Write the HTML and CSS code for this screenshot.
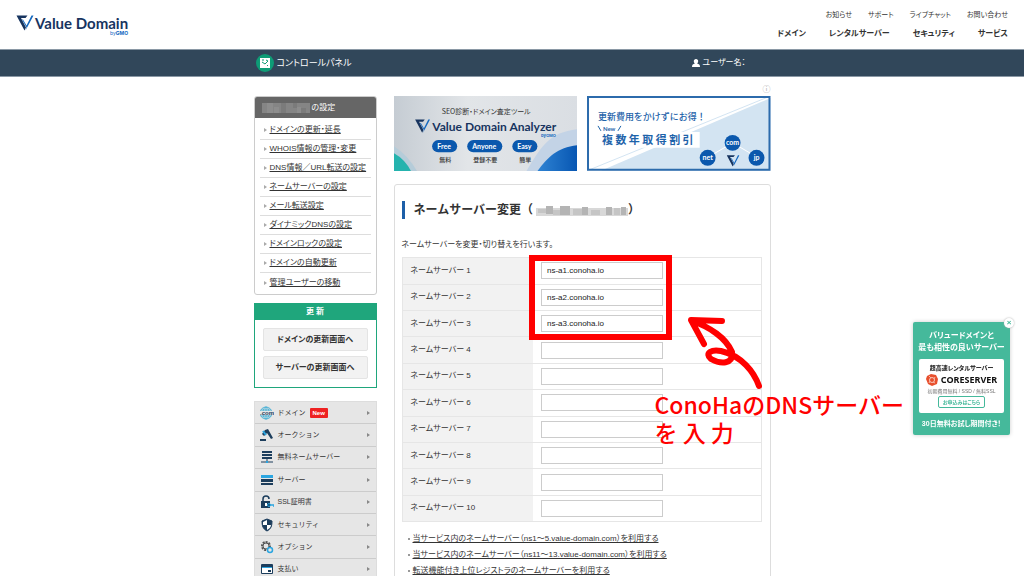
FILE: index.html
```html
<!DOCTYPE html>
<html lang="ja">
<head>
<meta charset="utf-8">
<title>コントロールパネル</title>
<link rel="stylesheet" href="styles.css">
</head>
<body>
<svg class="defs" aria-hidden="true">
  <symbol id="mark" viewBox="0 0 34 32">
    <path d="M0 1h22l-4 5H9l10 19-3 6z" fill="#17345f"/>
    <path d="M13 9l7 12L30 1h4L18 31l2-6-9-16z" fill="#1468bf"/>
  </symbol>
</svg>
<header class="header">
  <a class="logo" href="#"><svg class="logo-mark"><use href="#mark"/></svg><span class="logo-name">Value Domain<small>by<b>GMO</b></small></span></a>
  <nav class="navs">
    <div class="nav-sub"><a href="#">お知らせ</a><a href="#">サポート</a><a href="#">ライブチャット</a><a href="#">お問い合わせ</a></div>
    <div class="nav-main"><a href="#">ドメイン</a><a href="#">レンタルサーバー</a><a href="#">セキュリティ</a><a href="#">サービス</a></div>
  </nav>
</header>
<div class="bar">
  <div class="bar-inner">
    <a class="bar-title" href="#">
      <svg class="bar-icon" viewBox="0 0 18 18"><circle cx="9" cy="9" r="9" fill="#0e9c76"/><path d="M4 4h10v10H4z" fill="#fff"/><path d="M6 6h2M6 8l3 2 3-3M10 6l2 1M11 12l1-1" stroke="#0e9c76" fill="none"/></svg>
      コントロールパネル</a>
    <span class="user"><svg class="user-icon" viewBox="0 0 8 8"><path d="M4 0c3 0 2.500 4 1 4.500C7 5 8 5.500 8 8H0c0-2.500 1-3 3-3.500C1.500 4 1 0 4 0z" fill="#fff"/></svg>ユーザー名：</span>
  </div>
</div>
<div class="page">
  <aside class="side">
    <section class="settings">
      <h2><svg class="mosaic-dark" viewBox="0 0 48 10"><path fill="#858585" d="M0 0h48v10H0z"/><path fill="#7b7b7b" d="M19 0h5v10h-5zM31 0h4v5h-4zM39 5h5v5h-5z"/><path fill="#8d8d8d" d="M5 0h6v10H5zM35 4h4v6h-4zM12 4h5v6h-5z"/></svg>の設定</h2>
      <ul>
        <li><a href="#">ドメインの更新・延長</a></li>
        <li><a href="#">WHOIS情報の管理・変更</a></li>
        <li><a href="#">DNS情報／URL転送の設定</a></li>
        <li><a href="#">ネームサーバーの設定</a></li>
        <li><a href="#">メール転送設定</a></li>
        <li><a href="#">ダイナミックDNSの設定</a></li>
        <li><a href="#">ドメインロックの設定</a></li>
        <li><a href="#">ドメインの自動更新</a></li>
        <li><a href="#">管理ユーザーの移動</a></li>
      </ul>
    </section>
    <section class="renew">
      <h2>更 新</h2>
      <div class="renew-body"><button type="button">ドメインの更新画面へ</button><button type="button">サーバーの更新画面へ</button></div>
    </section>
    <nav class="menu">
      <a href="#"><svg viewBox="0 0 14 14"><g fill="none" stroke="#4fb3d6"><circle cx="6" cy="7" r="6"/><ellipse cx="6" cy="7" rx="3" ry="6"/><path d="M6 1v12M1 4h10M1 10h10"/></g><path d="M0 5h14v4H0z" fill="#e6e6e6"/><text x="0" y="9" class="com">.com</text></svg>ドメイン<em>New</em></a>
      <a href="#"><svg viewBox="0 0 14 14"><path d="M5 2l3-1 5 9-2 1-4-6-3 3-2-2z" fill="#1c3d5c"/><path d="M3 3l3 4" stroke="#2ba5e0" stroke-width="2"/><path d="M0 11h6v2H0z" fill="#1c3d5c"/></svg>オークション</a>
      <a href="#"><svg viewBox="0 0 14 14"><path d="M2 1h10v2H2zM2 4h10v2H2zM2 7h10v2H2z" fill="#1c3d5c"/><path d="M7 9v3M1 12h12" stroke="#1c3d5c"/><path d="M6 11h2v2H6z" fill="#2ba5e0"/></svg>無料ネームサーバー</a>
      <a href="#"><svg viewBox="0 0 14 14"><path d="M1 2h12v3H1z" fill="#2ba5e0"/><path d="M1 6h12v3H1zM1 10h12v2H1z" fill="#1c3d5c"/></svg>サーバー</a>
      <a href="#"><svg viewBox="0 0 14 14"><path d="M3 7V4c0-4 6-4 6 0" fill="none" stroke="#1c3d5c" stroke-width="1.500"/><path d="M1 6h9v7H1z" fill="#1c3d5c"/><path d="M5 8h2v3H5z" fill="#fff"/><circle cx="9" cy="10" r="1.500" fill="none" stroke="#2ba5e0"/><path d="M10 10h4v2" fill="none" stroke="#2ba5e0" stroke-width="1.500"/></svg>SSL証明書</a>
      <a href="#"><svg viewBox="0 0 14 14"><path d="M7 1l5 2c0 5-1 8-5 10C3 11 2 8 2 3z" fill="#1c3d5c" stroke="#1c3d5c"/><path d="M7 2v5H3V4zM7 7h4c0 2-2 4-4 5z" fill="#fff"/></svg>セキュリティ</a>
      <a href="#"><svg viewBox="0 0 14 14"><circle cx="6" cy="6" r="4" fill="none" stroke="#555" stroke-width="2" stroke-dasharray="2 1"/><circle cx="6" cy="6" r="3" fill="none" stroke="#555"/><circle cx="10" cy="10" r="2.500" fill="#e6e6e6" stroke="#2ba5e0" stroke-width="1.500"/></svg>オプション</a>
      <a href="#"><svg viewBox="0 0 14 14"><rect x="1" y="2" width="12" height="10" rx="1" fill="#1c3d5c"/><path d="M2 5h10v6H2z" fill="#fff"/><path d="M2 5h10v1H2z" fill="#2ba5e0"/><path d="M8 8h3v2H8z" fill="#1c3d5c"/></svg>支払い</a>
    </nav>
  </aside>
  <main class="main">
    <div class="banners">
      <svg class="banner" viewBox="0 0 183 75">
        <defs><linearGradient id="sky"><stop offset="0" stop-color="#c5ccd3"/><stop offset=".4" stop-color="#e2e5e8"/><stop offset="1" stop-color="#dadee3"/></linearGradient><linearGradient id="sea"><stop offset="0" stop-color="#2f83d3"/><stop offset="1" stop-color="#0756b2"/></linearGradient></defs>
        <path fill="url(#sky)" d="M0 0h183v75H0z"/>
        <path d="M132 75C147 50 155 36 183 33v42z" fill="#c3d3e6"/><path d="M143 75c10-14 20-24 40-26v26z" fill="url(#sea)"/>
        <path d="M0 50q14 9 23 25H0z" fill="#b5ccd9"/><path d="M0 57q11 6 17 18H0z" fill="#25b3ae"/>
        <text class="t7" x="92" y="18">SEO診断・ドメイン査定ツール</text>
        <use href="#mark" x="21" y="23" width="15" height="14"/>
        <text class="analyzer" x="100" y="35">Value Domain Analyzer</text><text class="gmo" x="154" y="41">byGMO</text>
        <g fill="#0b58ad"><rect x="38" y="44" width="25" height="12" rx="6"/><rect x="73" y="44" width="35" height="12" rx="6"/><rect x="118" y="44" width="25" height="12" rx="6"/></g>
        <g class="pill"><text x="50" y="53">Free</text><text x="90" y="53">Anyone</text><text x="130" y="53">Easy</text></g>
        <g class="t6"><text x="51" y="66">無料</text><text x="91" y="66">登録不要</text><text x="131" y="66">簡単</text></g>
      </svg>
      <div class="ad">
        <span class="ad-mark">ⓘ</span>
        <svg class="banner" viewBox="0 0 184 75">
          <path d="M0 0h184v75H0z" fill="#fff"/><path d="M14 75L184 2v73z" fill="#d3e4f2"/><path d="M0 75L184 0" stroke="#d3e4f2"/><path d="M1 1h182v73H1z" fill="none" stroke="#2c6bac" stroke-width="2"/>
          <text class="deal" x="11" y="24">更新費用をかけずにお得！</text>
          <text class="newtag" x="16" y="35">New</text><path d="M11 30l3 5M34 30l-3 5" stroke="#1e63aa"/>
          <path d="M12 36h101v16H12z" fill="#fff"/><text class="multi" x="15" y="48">複 数 年 取 得 割 引</text>
          <path d="M122 61l24-14 24 14" fill="none" stroke="#fff"/>
          <g fill="#0b58ad"><circle cx="146" cy="47" r="8"/><circle cx="121" cy="62" r="8"/><circle cx="170" cy="62" r="8"/></g>
          <g class="pill"><text x="146" y="49">com</text><text x="121" y="64">net</text><text x="170" y="64">jp</text></g>
          <use href="#mark" x="140" y="59" width="13" height="12"/>
        </svg>
      </div>
    </div>
    <section class="panel">
      <h1>ネームサーバー変更（<svg class="mosaic" viewBox="0 0 92 11"><path fill="#d8d8d8" d="M0 3h92v8H0z"/><path fill="#b4b4b4" d="M10 1h7v8h-7zM24 1h10v9H24zM46 2h6v8h-6zM70 2h6v8h-6zM85 2h5v8h-5z"/><path fill="#c5c5c5" d="M2 4h8v4H2zM17 5h7v5h-7zM37 4h9v6h-9zM55 5h9v5h-9zM78 3h6v7h-6z"/></svg>）</h1>
      <p>ネームサーバーを変更・切り替えを行います。</p>
      <table>
        <tr><th><label for="n1">ネームサーバー 1</label></th><td><input id="n1" type="text" value="ns-a1.conoha.io"></td></tr>
        <tr><th><label for="n2">ネームサーバー 2</label></th><td><input id="n2" type="text" value="ns-a2.conoha.io"></td></tr>
        <tr><th><label for="n3">ネームサーバー 3</label></th><td><input id="n3" type="text" value="ns-a3.conoha.io"></td></tr>
        <tr><th><label for="n4">ネームサーバー 4</label></th><td><input id="n4" type="text"></td></tr>
        <tr><th><label for="n5">ネームサーバー 5</label></th><td><input id="n5" type="text"></td></tr>
        <tr><th><label for="n6">ネームサーバー 6</label></th><td><input id="n6" type="text"></td></tr>
        <tr><th><label for="n7">ネームサーバー 7</label></th><td><input id="n7" type="text"></td></tr>
        <tr><th><label for="n8">ネームサーバー 8</label></th><td><input id="n8" type="text"></td></tr>
        <tr><th><label for="n9">ネームサーバー 9</label></th><td><input id="n9" type="text"></td></tr>
        <tr><th><label for="n10">ネームサーバー 10</label></th><td><input id="n10" type="text"></td></tr>
      </table>
      <ul class="links">
        <li><a href="#">当サービス内のネームサーバー（ns1～5.value-domain.com）を利用する</a></li>
        <li><a href="#">当サービス内のネームサーバー（ns11～13.value-domain.com）を利用する</a></li>
        <li><a href="#">転送機能付き上位レジストラのネームサーバーを利用する</a></li>
      </ul>
      <div class="frame"></div>
      <svg class="arrow" viewBox="686 315 80 78"><path d="M722 321l-31-1 13 24M692 321C710 327 726 338 732 352C734 365 720 364 711 359C704 353 712 349 721 351C742 356 754 372 759 386" fill="none" stroke="#f00" stroke-width="6" stroke-linecap="round" stroke-linejoin="round"/></svg>
      <div class="note">ConoHaのDNSサーバー<br>を 入 力</div>
    </section>
  </main>
</div>
<aside class="promo">
  <button class="close" type="button" aria-label="閉じる">×</button>
  <p>バリュードメインと<br>最も相性の良いサーバー</p>
  <div class="card">
    <b>超高速レンタルサーバー</b>
    <div class="core"><svg viewBox="0 0 12 12"><path d="M1 2l4-2 5 1 2 4-1 5-5 2-4-2-2-5z" fill="#e8502e"/><circle cx="6" cy="6" r="2.500" fill="none" stroke="#f9c9bc"/><path d="M3 2l2 2M9 3L8 5M9 9L7 8M3 9l1-2" stroke="#f7b9a8"/></svg>CORESERVER</div>
    <small>初期費用無料 / SSD / 無料SSL</small>
    <a href="#">お申込みはこちら</a>
  </div>
  <p>30日無料お試し期間付き！</p>
</aside>
</body>
</html>
```
FILE: styles.css
```css
* { box-sizing: border-box; margin: 0; padding: 0; }
body { height: 100vh; overflow: hidden; background: #fff; color: #333; font: 8px/14px "Liberation Sans", "Noto Sans CJK JP", sans-serif; font-feature-settings: "palt"; }
a { color: inherit; text-decoration: none; }
ul { list-style: none; }
button, input { font: inherit; color: inherit; }
.defs { display: none; }

.header { display: flex; justify-content: space-between; align-items: flex-start; height: 49px; padding: 0 16px; }
.logo { display: flex; gap: 1px; padding-top: 15px; }
.logo-mark { width: 18px; height: 16px; }
.logo-name { display: flex; flex-direction: column; font: 700 15px/16px Lato, sans-serif; color: #17345f; }
.logo-name small { font: 5px/5px Inter, sans-serif; color: #1468bf; text-align: right; }
.navs { display: flex; flex-direction: column; align-items: flex-end; gap: 5px; padding-top: 8px; }
.nav-sub, .nav-main { display: flex; }
.nav-sub { gap: 16px; font-size: 7px; }
.nav-main { gap: 23px; font-size: 8px; font-weight: 700; }

.bar { border: 1px solid #8a98a5; border-width: 1px 0; background: #31475a; color: #fff; }
.bar-inner { display: flex; justify-content: space-between; align-items: center; max-width: 517px; height: 26px; margin: 0 auto; padding: 0 25px 0 2px; }
.bar-title { display: flex; align-items: center; gap: 3px; font-size: 9px; }
.bar-icon { width: 18px; height: 18px; }
.user { display: flex; align-items: center; gap: 2px; }
.user-icon { width: 8px; height: 8px; }

.page { display: flex; gap: 17px; max-width: 517px; margin: 0 auto; padding-top: 19px; }
.side { flex: 0 0 123px; }
.settings { border: 1px solid #ccc; border-radius: 3px; overflow: hidden; }
.settings h2 { display: flex; align-items: center; gap: 2px; height: 21px; padding-left: 7px; background: #666; color: #fff; font-size: 8px; font-weight: 400; }
.mosaic-dark { width: 48px; height: 10px; }
.settings ul { padding: 3px 5px 2px; }
.settings li { display: flex; align-items: center; gap: 3px; height: 19px; padding-left: 4px; border-bottom: 1px solid #ddd; }
.settings li:last-child { border-bottom: 0; }
.settings li::before { content: ""; border: 2px solid transparent; border-left: 3px solid #aaa; border-right: 0; }
.settings a, .links a { text-decoration: underline; }
.renew { margin-top: 8px; border: 1px solid #1fa67c; }
.renew h2 { background: #1fa67c; color: #fff; font-size: 8px; line-height: 16px; text-align: center; }
.renew-body { display: grid; gap: 5px; padding: 8px; }
.renew button { height: 23px; border: 1px solid #e4e4e4; border-radius: 2px; background: #f2f2f2; font-weight: 700; }
.menu { display: grid; grid-template-rows: repeat(8, 1fr); height: 181px; margin-top: 13px; border: 1px solid #ddd; background: #e6e6e6; font-size: 7px; font-feature-settings: normal; }
.menu a { display: flex; align-items: center; gap: 4px; padding: 0 6px 0 5px; border-bottom: 1px solid #ccc; }
.menu a::after { content: ""; margin-left: auto; border: 2px solid transparent; border-left: 3px solid #888; border-right: 0; }
.menu svg { width: 14px; height: 14px; }
.menu em { padding: 0 3px; border-radius: 1px; background: #e22; color: #fff; font: 700 6px/10px "Liberation Sans", sans-serif; }
.com { font: 700 6px "Liberation Sans", sans-serif; fill: #1c3d5c; }

.main { flex: 1; min-width: 0; }
.banners { display: grid; grid-template-columns: 1fr 1fr; gap: 10px; }
.banner { display: block; width: 100%; }
.ad { position: relative; }
.ad-mark { position: absolute; right: 0; top: -13px; color: #aaa; }
.banner text { font-family: "Noto Sans CJK JP", sans-serif; fill: #333; }
.banner .t7 { font-size: 7px; text-anchor: middle; }
.banner .t6 text { font-size: 6px; font-weight: 500; text-anchor: middle; }
.banner .analyzer { font: 700 12px Lato, sans-serif; fill: #17345f; text-anchor: middle; }
.banner .gmo { font: 700 4px Inter, sans-serif; fill: #1468bf; text-anchor: middle; }
.banner .pill text { font: 700 7px Lato, sans-serif; fill: #fff; text-anchor: middle; }
.banner .deal { font-size: 9px; font-weight: 500; fill: #1e63aa; font-feature-settings: normal; }
.banner .newtag { font: 700 6px Lato, sans-serif; fill: #1e63aa; }
.banner .multi { font-size: 11px; font-weight: 700; fill: #1e63aa; }

.panel { position: relative; height: 440px; margin-top: 13px; padding: 16px 8px 16px 7px; border: 1px solid #ddd; border-radius: 3px; }
.panel h1 { display: flex; align-items: center; height: 18px; padding-left: 9px; border-left: 3px solid #1d5fa8; font-size: 12px; line-height: 18px; font-feature-settings: normal; white-space: nowrap; }
.mosaic { width: 92px; height: 11px; margin-left: 3px; }
.panel p { margin: 19px 0 5px; }
table { width: 100%; height: 265px; border-collapse: collapse; }
th, td { border: 1px solid #e6e6e6; padding: 0 8px; text-align: left; font-weight: 400; }
th { width: 131px; border-right: 0; background: #f2f2f2; }
td { border-left: 0; }
td input { display: block; width: 122px; height: 17px; padding: 0 5px; border: 1px solid #ccc; background: #fff; color: #222; }
.links { margin-top: 9px; line-height: 16px; }
.links li { display: flex; align-items: center; gap: 3px; padding-left: 6px; white-space: nowrap; }
.links li::before { content: ""; width: 2px; height: 2px; background: #999; }
.frame { position: absolute; left: 134px; top: 70px; width: 143px; height: 85px; border: 6px solid #f00; }
.arrow { position: absolute; left: 291px; top: 130px; width: 80px; height: 78px; }
.note { position: absolute; left: 260px; top: 205px; color: #f00; font: 500 23px/28px "Noto Sans CJK JP", sans-serif; white-space: nowrap; font-feature-settings: normal; }

.promo { position: fixed; right: 14px; top: 322px; width: 97px; padding: 8px 6px 5px; border-radius: 2px; background: #45b99b; color: #fff; text-align: center; font-size: 8px; line-height: 12px; font-weight: 700; box-shadow: 0 0 4px #ccc; }
.promo p { margin: 0 -4px; }
.promo p:last-child { font-size: 7px; }
.close { position: absolute; right: -4px; top: -4px; width: 10px; height: 10px; border: 0; border-radius: 5px; background: #fff; color: #45b99b; font-size: 8px; line-height: 10px; box-shadow: 0 0 2px #aaa; }
.card { display: flex; flex-direction: column; align-items: center; margin: 5px 0; padding: 3px 0 5px; border-radius: 2px; background: #fff; color: #333; font-size: 6px; line-height: 12px; }
.core { display: flex; align-items: center; gap: 3px; font: 700 9px/12px "Noto Sans", sans-serif; color: #111; }
.core svg { width: 12px; height: 12px; }
.card small { font-size: 5px; font-weight: 400; line-height: 10px; color: #777; }
.card a { padding: 0 4px; border: 1px solid #45b99b; border-radius: 2px; color: #45b99b; font-size: 5px; line-height: 10px; }
```
